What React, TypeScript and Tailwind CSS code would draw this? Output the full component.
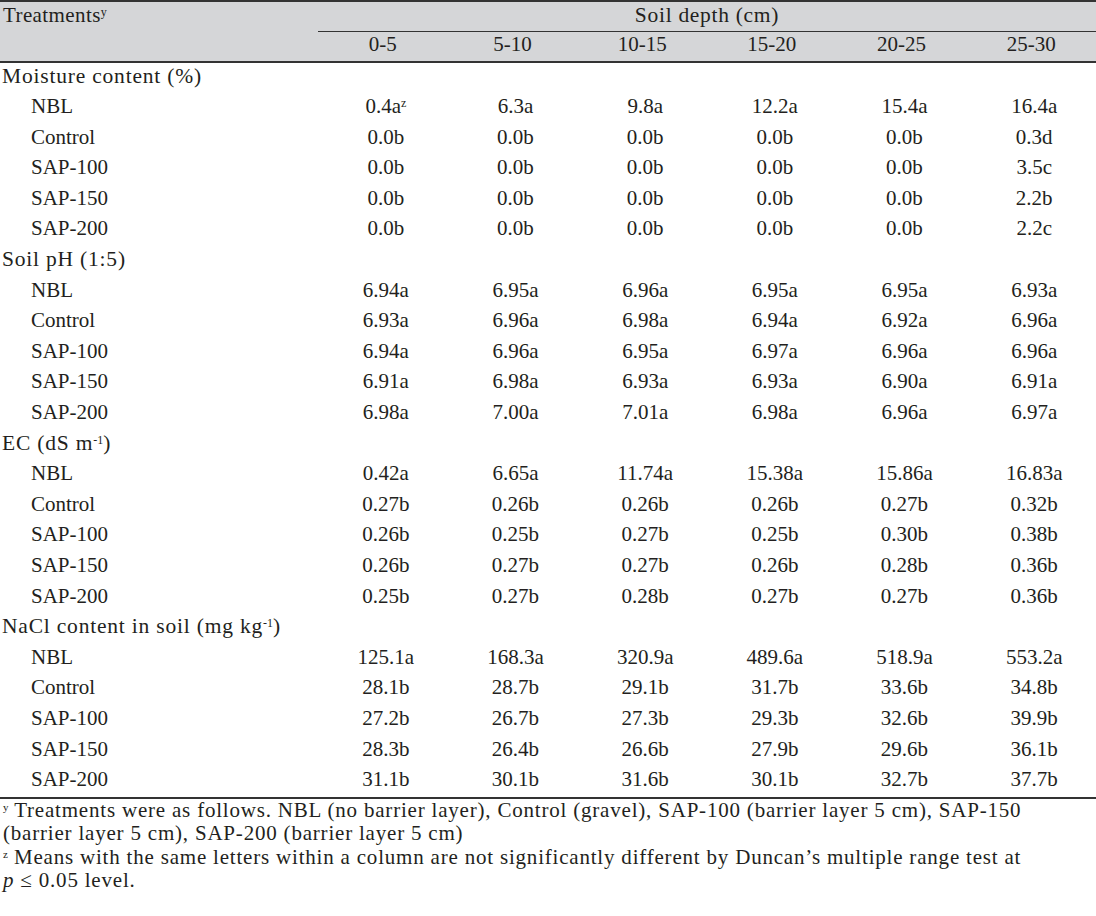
import React from "react";

type Group = {
  title: React.ReactNode;
  rows: { name: string; values: React.ReactNode[] }[];
};

const treatments = ["NBL", "Control", "SAP-100", "SAP-150", "SAP-200"];
const depths = ["0-5", "5-10", "10-15", "15-20", "20-25", "25-30"];

const mk = (data: string[][]) =>
  data.map((values, i) => ({ name: treatments[i], values: values as React.ReactNode[] }));

const groups: Group[] = [
  {
    title: "Moisture content (%)",
    rows: mk([
      ["0.4a", "6.3a", "9.8a", "12.2a", "15.4a", "16.4a"],
      ["0.0b", "0.0b", "0.0b", "0.0b", "0.0b", "0.3d"],
      ["0.0b", "0.0b", "0.0b", "0.0b", "0.0b", "3.5c"],
      ["0.0b", "0.0b", "0.0b", "0.0b", "0.0b", "2.2b"],
      ["0.0b", "0.0b", "0.0b", "0.0b", "0.0b", "2.2c"],
    ]),
  },
  {
    title: "Soil pH (1:5)",
    rows: mk([
      ["6.94a", "6.95a", "6.96a", "6.95a", "6.95a", "6.93a"],
      ["6.93a", "6.96a", "6.98a", "6.94a", "6.92a", "6.96a"],
      ["6.94a", "6.96a", "6.95a", "6.97a", "6.96a", "6.96a"],
      ["6.91a", "6.98a", "6.93a", "6.93a", "6.90a", "6.91a"],
      ["6.98a", "7.00a", "7.01a", "6.98a", "6.96a", "6.97a"],
    ]),
  },
  {
    title: (
      <>
        EC (dS m<sup className="text-[12px] tracking-normal">-1</sup>)
      </>
    ),
    rows: mk([
      ["0.42a", "6.65a", "11.74a", "15.38a", "15.86a", "16.83a"],
      ["0.27b", "0.26b", "0.26b", "0.26b", "0.27b", "0.32b"],
      ["0.26b", "0.25b", "0.27b", "0.25b", "0.30b", "0.38b"],
      ["0.26b", "0.27b", "0.27b", "0.26b", "0.28b", "0.36b"],
      ["0.25b", "0.27b", "0.28b", "0.27b", "0.27b", "0.36b"],
    ]),
  },
  {
    title: (
      <>
        NaCl content in soil (mg kg<sup className="text-[12px] tracking-normal">-1</sup>)
      </>
    ),
    rows: mk([
      ["125.1a", "168.3a", "320.9a", "489.6a", "518.9a", "553.2a"],
      ["28.1b", "28.7b", "29.1b", "31.7b", "33.6b", "34.8b"],
      ["27.2b", "26.7b", "27.3b", "29.3b", "32.6b", "39.9b"],
      ["28.3b", "26.4b", "26.6b", "27.9b", "29.6b", "36.1b"],
      ["31.1b", "30.1b", "31.6b", "30.1b", "32.7b", "37.7b"],
    ]),
  },
];

// superscript z on the very first value
groups[0].rows[0].values[0] = (
  <>
    0.4a<sup className="text-[12px]">z</sup>
  </>
);

export default function App() {
  return (
    <div className="w-[1096px] h-[916px] bg-white [font-family:'Liberation_Serif',serif] text-[21px] text-[#231f20]">
      {/* Header */}
      <div className="border-t-2 border-b-2 border-[#333] bg-[#d5d6d8]">
        <div className="grid grid-cols-[318px_1fr]">
          <div className="h-[30px] pl-[3px] leading-[26px] tracking-[0.4px]">
            Treatments<sup className="text-[12px] tracking-normal">y</sup>
          </div>
          <div className="h-[30px] border-b-[1.5px] border-[#333] text-center leading-[26px] text-[21.5px] tracking-[0.7px]">
            Soil depth (cm)
          </div>
        </div>
        <div className="grid grid-cols-[318px_repeat(6,1fr)] h-[28.5px] leading-[24px]">
          <div />
          {depths.map((d) => (
            <div key={d} className="text-center">
              {d}
            </div>
          ))}
        </div>
      </div>

      {/* Body */}
      <div className="border-b-2 border-[#333]">
        {groups.map((g, gi) => (
          <div key={gi}>
            <div className="h-[30.6px] pl-[2px] leading-[26px] text-[21.5px] tracking-[0.8px]">
              {g.title}
            </div>
            {g.rows.map((r) => (
              <div
                key={r.name}
                className="grid grid-cols-[318px_repeat(6,1fr)] h-[30.6px] leading-[26px]"
              >
                <div className="pl-[31px]">{r.name}</div>
                {r.values.map((v, vi) => (
                  <div key={vi} className="text-center pl-[6px]">
                    {v}
                  </div>
                ))}
              </div>
            ))}
          </div>
        ))}
      </div>

      {/* Footnotes */}
      <div className="pl-[3px] text-[21px] leading-[23.5px] tracking-[0.8px] whitespace-nowrap">
        <p>
          <sup className="text-[11px] tracking-normal">y</sup> Treatments were as follows. NBL (no barrier
          layer), Control (gravel), SAP-100 (barrier layer 5 cm), SAP-150
          <br />
          (barrier layer 5 cm), SAP-200 (barrier layer 5 cm)
        </p>
        <p>
          <sup className="text-[11px] tracking-normal">z</sup> Means with the same letters within a column
          are not significantly different by Duncan&rsquo;s multiple range test at
          <br />
          <i>p</i> &le; 0.05 level.
        </p>
      </div>
    </div>
  );
}
